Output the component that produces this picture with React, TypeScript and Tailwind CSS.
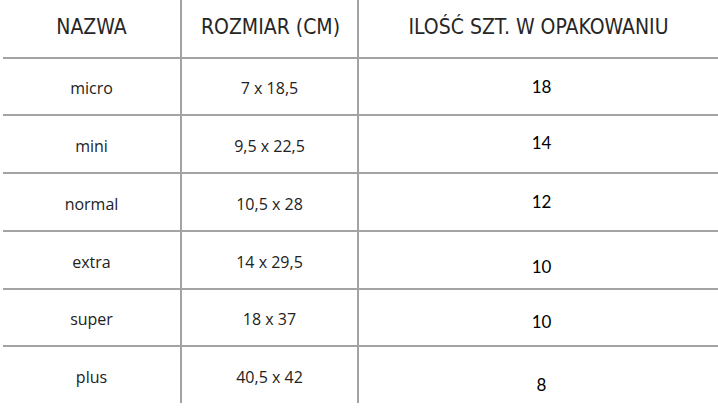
const rows = [
  { name: "micro", size: "7 x 18,5", qty: "18", shift: "mt-0" },
  { name: "mini", size: "9,5 x 22,5", qty: "14", shift: "-mt-[2px]" },
  { name: "normal", size: "10,5 x 28", qty: "12", shift: "mt-0" },
  { name: "extra", size: "14 x 29,5", qty: "10", shift: "mt-[14px]" },
  { name: "super", size: "18 x 37", qty: "10", shift: "mt-[8px]" },
  { name: "plus", size: "40,5 x 42", qty: "8", shift: "mt-[20px]" },
];

const heights = ["h-[57px]", "h-[58px]", "h-[58px]", "h-[58px]", "h-[57px]", "h-[56px]"];

export default function App() {
  return (
    <div className="h-[408px] w-[718px] overflow-hidden bg-white pl-[3px]">
      <div className="grid grid-cols-[179px_177px_1fr]">
        {/* header */}
        <div className="flex h-[59px] items-center justify-center border-b-2 border-r-2 border-[#a3a3a3] pb-[2px] font-['DejaVu_Sans_Condensed',sans-serif] text-[21px] text-[#262626]">
          NAZWA
        </div>
        <div className="flex h-[59px] items-center justify-center border-b-2 border-r-2 border-[#a3a3a3] pb-[2px] pl-[2px] font-['DejaVu_Sans_Condensed',sans-serif] text-[21px] text-[#262626]">
          ROZMIAR (CM)
        </div>
        <div className="flex h-[59px] items-center justify-center border-b-2 border-[#a3a3a3] pb-[2px] font-['DejaVu_Sans_Condensed',sans-serif] text-[21px] text-[#262626]">
          ILOŚĆ SZT. W OPAKOWANIU
        </div>

        {rows.map((r, i) => {
          const last = i === rows.length - 1;
          const bottom = last ? "" : "border-b-2";
          return (
            <div key={r.name} className="contents">
              <div
                className={`flex ${heights[i]} items-center justify-center ${bottom} border-r-2 border-[#a3a3a3] pt-[3px] font-['Open_Sans',sans-serif] text-[16px] text-[#222]`}
              >
                {r.name}
              </div>
              <div
                className={`flex ${heights[i]} items-center justify-center ${bottom} border-r-2 border-[#a3a3a3] pt-[3px] font-['Open_Sans',sans-serif] text-[16px] text-[#222]`}
              >
                {r.size}
              </div>
              <div
                className={`flex ${heights[i]} items-center justify-center ${bottom} border-[#a3a3a3] pl-[6px] font-['Lato',sans-serif] text-[17px] text-black`}
              >
                <span className={r.shift}>{r.qty}</span>
              </div>
            </div>
          );
        })}
      </div>
    </div>
  );
}
